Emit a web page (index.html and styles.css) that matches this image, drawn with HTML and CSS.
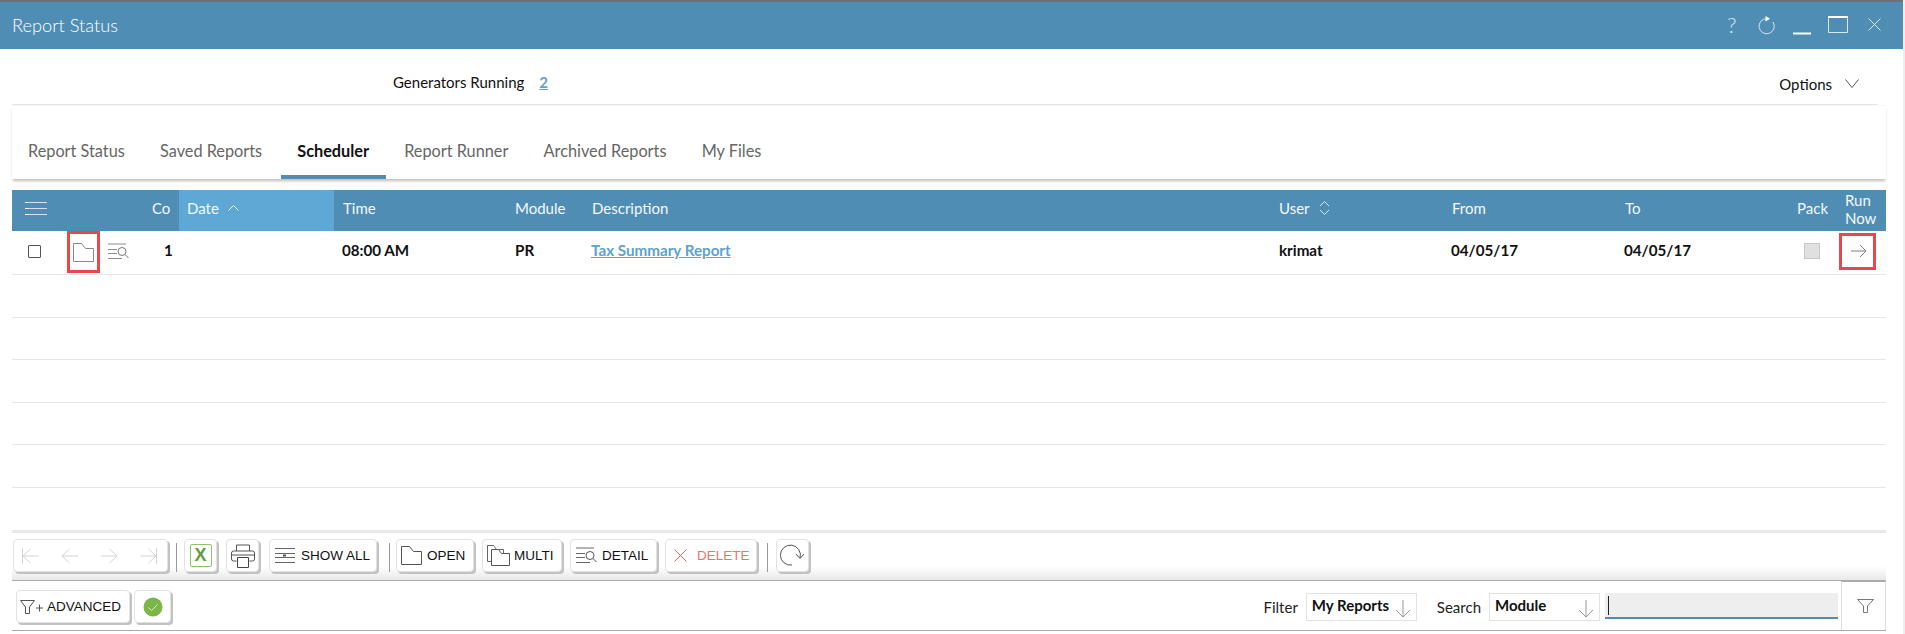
FILE: index.html
```html
<!DOCTYPE html>
<html lang="en">
<head>
<meta charset="utf-8">
<title>Report Status</title>
<link rel="stylesheet" href="styles.css">
</head>
<body>
<div class="window">
  <header class="titlebar">
    <span class="title">Report Status</span>
    <div class="winctrls">
      <span class="help">?</span>
      <svg class="ic" width="18" height="20" viewBox="0 0 18 20"><path d="M10 3.6A7.6 7.6 0 1 0 16 7" fill="none" stroke="#d5e3ec" stroke-width="1"/><path d="M8.5 1l4.5 2.8-4.5 2.8z" fill="#fff"/></svg>
      <svg class="ic min" width="18" height="20" viewBox="0 0 18 20"><path d="M0 18.500h18" stroke="#fff" stroke-width="2"/></svg>
      <svg class="ic max" width="20" height="17" viewBox="0 0 20 17"><path d="M.5 1h19v15.500H.5z" fill="none" stroke="#dbe7ef" stroke-width="1"/><path d="M0 1h20" stroke="#fff" stroke-width="2"/></svg>
      <svg class="ic close" width="13" height="13" viewBox="0 0 13 13"><path d="M.5.500l12 12M12.500.500l-12 12" stroke="#dbe7ef" stroke-width="1"/></svg>
    </div>
  </header>

  <div class="main">
    <div class="info">
      <div class="gen"><span>Generators Running</span><a class="genlink">2</a></div>
      <div class="options"><span>Options</span>
        <svg width="14" height="9" viewBox="0 0 14 9"><path d="M.5.500L7 8.500l6.500-8" fill="none" stroke="#555"/></svg>
      </div>
    </div>
    <nav class="tabs">
      <a class="tab">Report Status</a>
      <a class="tab">Saved Reports</a>
      <a class="tab active">Scheduler</a>
      <a class="tab">Report Runner</a>
      <a class="tab">Archived Reports</a>
      <a class="tab">My Files</a>
    </nav>

    <div class="table">
      <div class="row head">
        <div class="cell">
          <svg width="22" height="13" viewBox="0 0 22 13"><path d="M0 .5h22M0 6.500h22M0 12.500h22" stroke="#d3e2ec"/><path d="M0 .5h3M0 6.500h3M0 12.500h3" stroke="#fff"/></svg>
        </div>
        <div class="cell"></div>
        <div class="cell"></div>
        <div class="cell co">Co</div>
        <div class="cell sorted">Date
          <svg class="sort" width="11" height="6" viewBox="0 0 11 6"><path d="M.5 5.500l5-5 5 5" fill="none" stroke="#e8f2f8"/></svg>
        </div>
        <div class="cell shift">Time</div>
        <div class="cell">Module</div>
        <div class="cell">Description</div>
        <div class="cell">User
          <svg class="sort" width="11" height="14" viewBox="0 0 11 14"><path d="M1 5l4.500-4.500L10 5M1 9l4.500 4.500L10 9" fill="none" stroke="#dbe7ef"/></svg>
        </div>
        <div class="cell shift">From</div>
        <div class="cell shift">To</div>
        <div class="cell">Pack</div>
        <div class="cell runhead">Run<br>Now</div>
      </div>

      <div class="row data">
        <div class="cell"><span class="check"></span></div>
        <div class="cell redcell">
          <span class="redbox">
            <svg width="21" height="19" viewBox="0 0 21 19"><path d="M.5.500h8l4 5h8v13H.5z" fill="#fff" stroke="#8a8a8a"/></svg>
          </span>
        </div>
        <div class="cell iconcell">
          <svg width="21" height="17" viewBox="0 0 21 17"><path d="M0 1h18M0 6.500h9M0 10.500h9M0 15.500h14" stroke="#8d8d8d"/><circle cx="14" cy="8.500" r="4" fill="#fff" stroke="#777"/><path d="M17 11.500l3.500 3.500" stroke="#777"/></svg>
        </div>
        <div class="cell one">1</div>
        <div class="cell"></div>
        <div class="cell">08:00 AM</div>
        <div class="cell">PR</div>
        <div class="cell linkcell"><a class="report">Tax Summary Report</a></div>
        <div class="cell">krimat</div>
        <div class="cell">04/05/17</div>
        <div class="cell">04/05/17</div>
        <div class="cell"><span class="pack"></span></div>
        <div class="cell runcell">
          <span class="redbox runbox">
            <svg width="16" height="14" viewBox="0 0 16 14"><path d="M0 7h15M9 1l6 6-6 6" fill="none" stroke="#808080"/></svg>
          </span>
        </div>
      </div>
      <div class="row blank"></div>
      <div class="row blank"></div>
      <div class="row blank"></div>
      <div class="row blank"></div>
      <div class="row blank"></div>
    </div>

    <div class="spacer"></div>

    <div class="toolbar">
      <div class="btn nav">
        <svg width="17" height="16" viewBox="0 0 17 16"><path d="M.5 0v16M16.500 8H1M8.500 1L1 8l7.500 7" fill="none" stroke="#d4d4d4"/></svg>
        <svg width="17" height="16" viewBox="0 0 17 16"><path d="M17 8H1M8.500 1L1 8l7.500 7" fill="none" stroke="#d4d4d4"/></svg>
        <svg width="17" height="16" viewBox="0 0 17 16"><path d="M0 8h16M8.500 1L16 8l-7.500 7" fill="none" stroke="#d4d4d4"/></svg>
        <svg width="17" height="16" viewBox="0 0 17 16"><path d="M16.500 0v16M.5 8H16M8.500 1L16 8l-7.500 7" fill="none" stroke="#d4d4d4"/></svg>
      </div>
      <span class="sep sep1"></span>
      <div class="btn square">
        <span class="excel">X</span>
      </div>
      <div class="btn square printbtn">
        <svg width="24" height="24" viewBox="0 0 24 24"><path d="M5.500 7V1h13v6M5.500 17H2.500a2 2 0 0 1-2-2V9a2 2 0 0 1 2-2h19a2 2 0 0 1 2 2v6a2 2 0 0 1-2 2h-3M.5 11h23" fill="none" stroke="#555"/><path d="M6.500 13.500h11v10h-11z" fill="#fff" stroke="#444"/></svg>
      </div>
      <div class="btn showall">
        <svg width="20" height="15" viewBox="0 0 20 15"><path d="M0 .5h20M0 5.500h20M0 9.500h20M0 14.500h20" stroke="#666"/><path d="M8 7.500h3" stroke="#555" stroke-width="2"/></svg>
        <span>SHOW ALL</span>
      </div>
      <span class="sep sep2"></span>
      <div class="btn open">
        <svg width="21" height="19" viewBox="0 0 21 19"><path d="M.5.500h8l4 5h8v13H.5z" fill="#fff" stroke="#555"/></svg>
        <span>OPEN</span>
      </div>
      <div class="btn multi">
        <svg width="23" height="21" viewBox="0 0 23 21"><path d="M.5.500h6l3 4h7v12H.5z" fill="#fff" stroke="#666"/><path d="M4.500 4.500h7l3 4h8v12h-18z" fill="#fff" stroke="#555"/></svg>
        <span>MULTI</span>
      </div>
      <div class="btn detail">
        <svg width="21" height="17" viewBox="0 0 21 17"><path d="M0 1h18M0 6.500h9M0 10.500h9M0 15.500h14" stroke="#666"/><circle cx="14" cy="8.500" r="4" fill="#fff" stroke="#555"/><path d="M17 11.500l3.500 3.500" stroke="#555"/></svg>
        <span>DETAIL</span>
      </div>
      <div class="btn delete">
        <svg width="13" height="13" viewBox="0 0 13 13"><path d="M.5.500l12 12M12.500.500l-12 12" stroke="#f2625c" stroke-width="1"/></svg>
        <span>DELETE</span>
      </div>
      <span class="sep sep3"></span>
      <div class="btn square">
        <svg width="25" height="23" viewBox="0 0 25 23"><path d="M20 14A10 10 0 1 0 12 21" fill="none" stroke="#555"/><path d="M16 10l4 4.500 4-4.500" fill="none" stroke="#555"/></svg>
      </div>
    </div>

    <div class="filterbar">
      <div class="btn advanced">
        <svg width="24" height="14" viewBox="0 0 24 14"><path d="M.5.500h14L9.500 7v6.500h-4V7z" fill="none" stroke="#555"/><path d="M16 8h7M19.500 4.500v7" stroke="#555"/></svg>
        <span>ADVANCED</span>
      </div>
      <div class="btn okbtn">
        <svg width="20" height="20" viewBox="0 0 20 20"><circle cx="10" cy="10" r="9.500" fill="#7cb648"/><path d="M5.500 10.500l3 3 6-6" fill="none" stroke="#dcebc8"/></svg>
      </div>
      <div class="filters">
        <span class="lbl">Filter</span>
        <div class="select sel1"><span>My Reports</span>
          <svg width="16" height="18" viewBox="0 0 16 18"><path d="M8 0v17M1 10l7 7 7-7" fill="none" stroke="#999"/></svg>
        </div>
        <span class="lbl lbl2">Search</span>
        <div class="select sel2"><span>Module</span>
          <svg width="16" height="18" viewBox="0 0 16 18"><path d="M8 0v17M1 10l7 7 7-7" fill="none" stroke="#999"/></svg>
        </div>
        <div class="searchbox"><span class="caret"></span></div>
      </div>
      <div class="funnel">
        <svg width="17" height="14" viewBox="0 0 17 14"><path d="M.5.500h16L10.500 7v6.500h-4V7z" fill="none" stroke="#777"/></svg>
      </div>
    </div>
  </div>
</div>
</body>
</html>
```
FILE: styles.css
```css
* { box-sizing: border-box; }
html, body { margin: 0; height: 100%; }
body {
  background: #eeeeee;
  font-family: Lato, "Liberation Sans", sans-serif;
  overflow: hidden;
}
.window {
  width: 1903px;
  height: 634px;
  background: #fff;
  display: flex;
  flex-direction: column;
}
.titlebar {
  height: 49px;
  flex: none;
  background: #4f8db4;
  border-top: 2px solid #6b7278;
  display: flex;
  align-items: center;
  justify-content: space-between;
  padding: 0 22px 2px 12px;
  color: #fff;
}
.title { font-size: 18.200px; font-weight: 300; }
.winctrls { display: flex; align-items: center; }
.help { font-size: 22px; font-weight: 300; color: #dbe7ef; width: 12px; margin-right: 18px; }
.ic { display: block; }
.min { margin-left: 18px; }
.max { margin-left: 17px; }
.close { margin-left: 20px; }

.main {
  flex: 1;
  min-height: 0;
  display: flex;
  flex-direction: column;
  width: 1886px;
  padding-left: 12px;
}
.info {
  height: 56px;
  flex: none;
  margin-right: 8px;
  border-bottom: 1px solid #e4e4e4;
  display: flex;
  align-items: center;
  justify-content: space-between;
  padding: 0 19px 0 381px;
  font-size: 15px;
  color: #111;
}
.gen { display: flex; gap: 15px; margin-top: 11px; }
.genlink { color: #5ba3d0; font-weight: 700; text-decoration: underline; }
.options { display: flex; align-items: center; gap: 13px; margin-top: 14px; }

.tabs {
  height: 74px;
  flex: none;
  display: flex;
  align-items: flex-end;
  box-shadow: 0 3px 3px -1px #bbb;
  border-top: 1px solid #f8f8f8;
}
.tab {
  height: 60px;
  padding: 22px 17.600px 0;
  font-size: 16.300px;
  color: #666;
  border-bottom: 4px solid transparent;
}
.tab:first-child { padding-left: 16px; }
.tab.active { color: #111; font-weight: 700; padding: 22px 16.500px 0; border-bottom-color: #4f8db4; margin: 0 1px; }

.table { margin-top: 11px; flex: none; }
.row {
  display: grid;
  grid-template-columns: 55px 33px 40px 39px 155px 173px 77px 687px 172px 173px 173px 48px 49px;
}
.cell {
  padding-left: 8px;
  display: flex;
  align-items: center;
  min-width: 0;
  white-space: nowrap;
}
.head {
  height: 41px;
  background: #4f8db4;
  color: #f4f8fb;
  font-size: 15px;
  line-height: 18px;
}
.head .cell { padding-bottom: 5px; }
.head .cell:first-child { padding-left: 13px; }
.head .cell:nth-child(n+1).shift { padding-left: 9px; }
.head .co { padding-left: 12px; }
.sorted { background: #5fa8d6; }
.sort { margin-left: 9px; }
.head .runhead { display: block; padding-top: 1px; padding-bottom: 0; }

.data {
  height: 44px;
  border-bottom: 1px solid #e6e6e6;
  font-size: 15.200px;
  font-weight: 700;
  color: #111;
}
.data .cell { padding-bottom: 6px; }
.data .cell:first-child { padding-left: 16px; padding-bottom: 0; }
.linkcell { padding-left: 7px; }
.blank { height: 42.500px; border-bottom: 1px solid #e6e6e6; }
.check { width: 13px; height: 13px; border: 1px solid #555; border-radius: 1px; margin-top: -2px; }
.data .redcell { padding: 0; align-items: flex-start; }
.redbox {
  display: flex;
  align-items: center;
  justify-content: center;
  width: 33px;
  height: 42px;
  border: 3px solid #e8484a;
}
.data .iconcell { padding-left: 8px; padding-bottom: 2px; }
.data .one { padding-left: 24px; }
.report { color: #5ba3d0; text-decoration: underline; }
.data .pack { width: 16px; height: 16px; background: #e0e0e0; border: 1px solid #c8c8c8; margin: 3px 0 0 7px; }
.data .runcell { padding: 0 0 0 2px; }
.runbox { width: 37px; height: 37px; margin-top: -3px; padding-left: 2px; }

.spacer { flex: 1; }

.toolbar {
  height: 51px;
  flex: none;
  border-top: 3px double #e6e6e6;
  border-bottom: 1px solid #aaa;
  background: linear-gradient(#fff 70%, #e9e9e9);
  display: flex;
  align-items: flex-start;
  padding: 6px 0 0 1px;
}
.btn {
  height: 33px;
  flex: none;
  display: flex;
  align-items: center;
  background: #fff;
  border: 1px solid #e2e2e2;
  border-radius: 4px;
  box-shadow: 2px 2px 0 #c2c2c2;
  font-family: "Liberation Sans", Arial, sans-serif;
  font-size: 13.500px;
  color: #111;
}
.sep { width: 1px; height: 29px; background: #999; margin: 4px 8px 0 8px; flex: none; }
.sep1 { margin-right: 7px; }
.sep2 { margin: 4px 6px 0 12px; }
.sep3 { margin: 4px 8px 0 10px; }
.square { width: 33px; justify-content: center; margin-right: 9px; }
.printbtn { margin-right: 10px; }
.nav { width: 155px; justify-content: space-between; padding: 0 10px 0 8px; }
.excel {
  width: 22px; height: 23px;
  border: 1px solid #8cc46a;
  border-radius: 2px;
  color: #5f9e38;
  font-weight: 700;
  font-size: 18px;
  display: flex;
  align-items: center;
  justify-content: center;
}
.showall { width: 108px; gap: 6px; padding-left: 5px; }
.open { width: 78px; gap: 5px; padding-left: 4px; margin-right: 8px; }
.multi { width: 80px; gap: 4px; padding-left: 4px; margin-right: 8px; }
.detail { width: 87px; gap: 5px; padding-left: 5px; margin-right: 8px; }
.delete { width: 92px; gap: 10px; padding-left: 8px; color: #f2706a; }

.filterbar {
  height: 50px;
  flex: none;
  border-bottom: 1px solid #aaa;
  display: flex;
  align-items: flex-start;
  padding: 9px 0 0 4px;
  margin-bottom: 3px;
}
.advanced { width: 114px; gap: 3px; padding-left: 3px; margin-right: 4px; }
.okbtn { width: 37px; justify-content: center; }
.filters {
  margin-left: auto;
  display: flex;
  align-items: center;
  height: 28px;
  margin-top: 3px;
  font-size: 15px;
  color: #222;
}
.lbl { margin-right: 8px; }
.lbl2 { margin-left: 20px; }
.select {
  height: 28px;
  display: flex;
  align-items: center;
  justify-content: space-between;
  border: 1px solid #e2e2e2;
  padding: 0 5px;
  font-weight: 700;
  color: #111;
  width: 111px;
}
.select span { margin-top: -4px; }
.select svg { margin-top: 3px; }
.sel2 { margin-right: 5px; }
.searchbox {
  width: 233px;
  height: 26px;
  background: #eee;
  border-bottom: 2px solid #4f8db4;
  padding: 3px 0 0 3px;
  align-self: flex-start;
}
.caret { display: block; width: 1px; height: 19px; background: #222; }
.funnel {
  width: 45px;
  height: 49px;
  margin-top: -9px;
  margin-left: 3px;
  border-left: 1px solid #ddd;
  border-right: 1px solid #ddd;
  border-top: 1px solid #aaa;
  display: flex;
  align-items: center;
  justify-content: center;
  padding-left: 4px;
}
```
